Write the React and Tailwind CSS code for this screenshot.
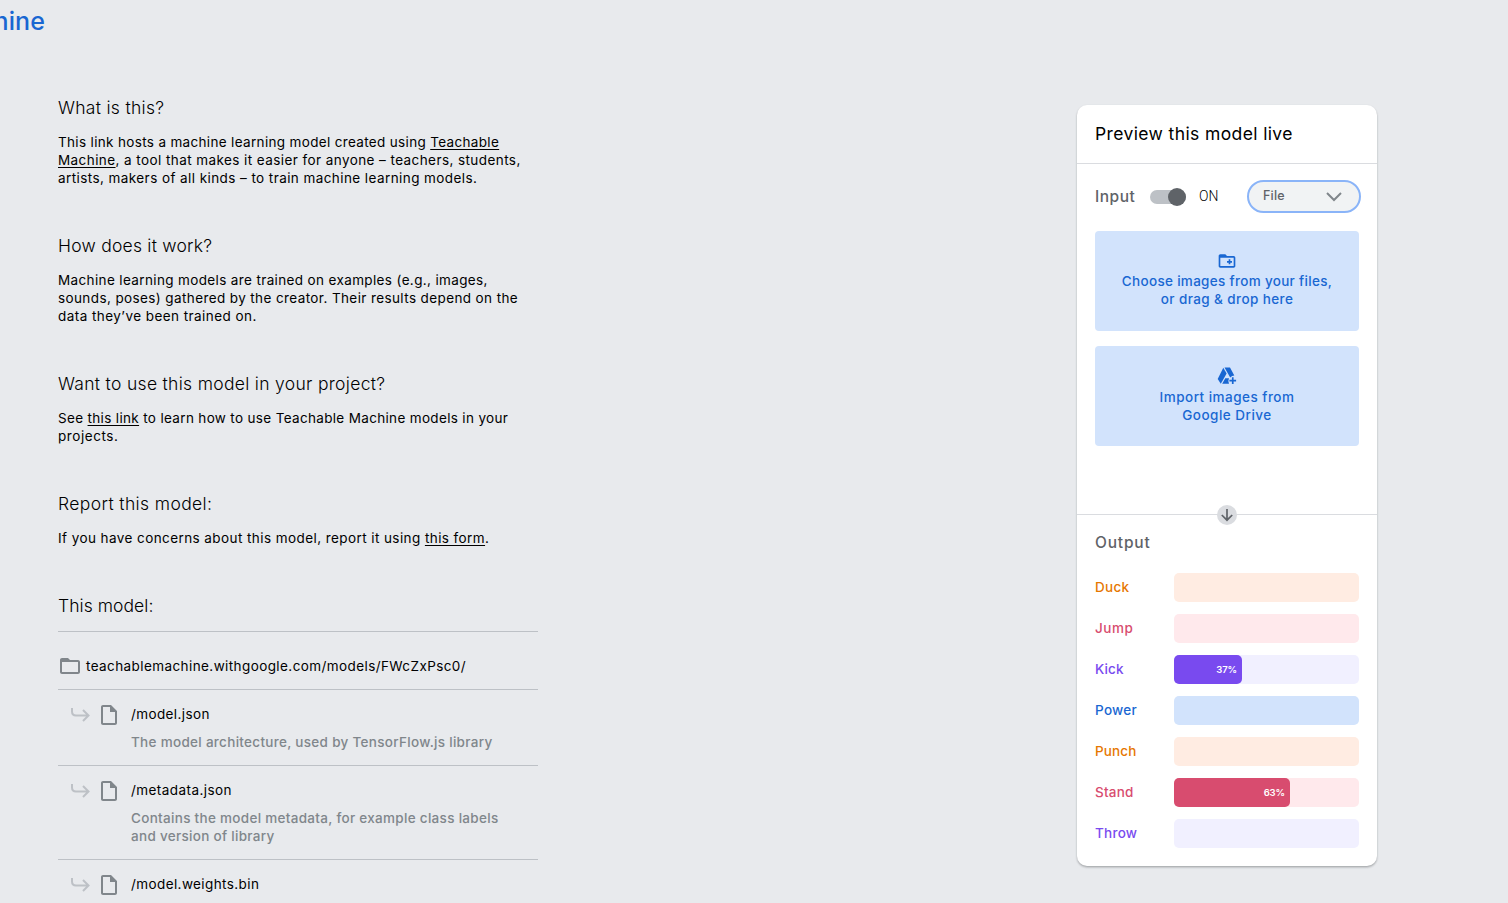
import { MdFolderOpen, MdOutlineInsertDriveFile } from 'react-icons/md';

function Section({ title, titleClass, children }) {
  return (
    <section className="mb-[47px]">
      <h2 className={`mb-[13px] text-[17.5px] leading-6 font-light ${titleClass}`}>{title}</h2>
      <div className="text-[13.5px] leading-[18px]">{children}</div>
    </section>
  );
}

function Line({ className, children }) {
  return <span className={`block whitespace-nowrap ${className}`}>{children}</span>;
}

function Link({ children }) {
  return (
    <a href="#" className="underline decoration-1 underline-offset-[1.5px]">
      {children}
    </a>
  );
}

function FolderPlusIcon() {
  return (
    <svg className="mb-px size-5" viewBox="0 0 24 24" fill="currentColor">
      <path d="M20 6h-8l-2-2H4c-1.100 0-2 .9-2 2v12c0 1.100.9 2 2 2h16c1.100 0 2-.9 2-2V8c0-1.100-.9-2-2-2zm0 12H4V8h16v10zM14 10h2v2h2v2h-2v2h-2v-2h-2v-2h2z" />
    </svg>
  );
}

function DrivePlusIcon() {
  return (
    <svg className="mb-0.5 size-5" viewBox="0 0 20 20" fill="currentColor">
      <path d="M6.300 1.800L9.600 7.500 3.800 17.800.7 13z" />
      <path d="M7.500 1.500H13L17.300 9.500Q15 9.500 13.200 11.500z" />
      <path d="M8.300 12.300H12Q10.800 14.500 12 17.700H5.200z" />
      <path d="M14.900 11.200h1.700v2.500h2.500v1.700h-2.500v2.500h-1.700v-2.500h-2.500v-1.700h2.500z" />
    </svg>
  );
}

function FileRow({ name, nameClass, children }) {
  return (
    <li className="flex border-t border-[#bdc1c6] pt-[13px] pb-[14px]">
      <svg className="mt-[3px] ml-3 h-[18px] w-[20px] shrink-0" viewBox="0 0 20 18" fill="none" stroke="#bdc1c6" strokeWidth="2">
        <path d="M2 2v3.500q0 4 4 4h12M13 4l5.500 5.500-5.500 5.500" />
      </svg>
      <MdOutlineInsertDriveFile className="ml-[7px] size-6 shrink-0 text-[#80868b]" />
      <div className="mt-0.5 ml-[10px] text-[13.5px] leading-[18px]">
        <p className={nameClass}>{name}</p>
        <div className="mt-[10px] font-medium text-[#80868b]">{children}</div>
      </div>
    </li>
  );
}

const classes = [
  { name: 'Duck', label: 'text-[#e67701] tracking-[0.27px]', track: 'bg-[#ffece2]' },
  { name: 'Jump', label: 'text-[#d84c6f] tracking-[0.55px]', track: 'bg-[#ffe9ec]' },
  { name: 'Kick', label: 'text-[#794aef] tracking-[0.1px]', track: 'bg-[#f1f0ff]', fill: 'bg-[#794aef]', value: 37 },
  { name: 'Power', label: 'text-[#1967d2] tracking-[0.3px]', track: 'bg-[#d2e3fc]' },
  { name: 'Punch', label: 'text-[#e67701] tracking-[0.15px]', track: 'bg-[#ffece2]' },
  { name: 'Stand', label: 'text-[#d84c6f] tracking-[0.2px]', track: 'bg-[#ffe9ec]', fill: 'bg-[#d84c6f]', value: 63 },
  { name: 'Throw', label: 'text-[#794aef] tracking-[0.25px]', track: 'bg-[#f1f0ff]' },
];

const TRACK_WIDTH = 185;

function UploadBox({ icon, children }) {
  return (
    <button className="flex h-[100px] w-full flex-col items-center rounded bg-[#d2e3fc] pt-5 text-[13.5px] leading-[18px] font-medium text-[#1967d2]">
      {icon}
      {children}
    </button>
  );
}

function PreviewCard() {
  return (
    <aside className="mt-[105px] h-[761px] w-[300px] shrink-0 rounded-[10px] bg-white shadow-[0_1px_2px_rgba(60,64,67,0.3),0_2px_2px_rgba(60,64,67,0.12)]">
      <h2 className="flex h-[59px] items-center border-b border-[#dadce0] pt-px pl-[18px] text-[17.5px] font-normal tracking-[0.38px] whitespace-nowrap">
        Preview this model live
      </h2>
      <div className="h-[351px] border-b border-[#dadce0] px-[18px] pt-4">
        <div className="-mr-0.5 flex h-[33px] items-center">
          <span className="w-[55px] text-[15.5px] font-medium tracking-[0.5px] text-[#5f6368]">Input</span>
          <span className="flex h-[14px] w-9 items-center justify-end rounded-full bg-[#bdc1c6]">
            <span className="size-[18px] shrink-0 rounded-full bg-[#5f6368]" />
          </span>
          <span className="ml-[13px] font-['Roboto',sans-serif] text-[14px] font-light">ON</span>
          <button className="ml-auto flex h-[33px] w-[114px] items-center justify-between rounded-full border-2 border-[#8ab4f8] bg-[#f1f3f4] pr-[17px] pl-[14px] text-[12.5px] font-medium tracking-[0.2px] text-[#5f6368]">
            File
            <svg className="h-[10px] w-[16px]" viewBox="0 0 16 10" fill="none" stroke="#80868b" strokeWidth="2">
              <path d="M1 1l7 7 7-7" />
            </svg>
          </button>
        </div>
        <div className="mt-[18px] flex flex-col gap-[15px]">
          <UploadBox icon={<FolderPlusIcon />}>
            <Line className="tracking-[0.31px]">Choose images from your files,</Line>
            <Line className="tracking-[0.4px]">or drag &amp; drop here</Line>
          </UploadBox>
          <UploadBox icon={<DrivePlusIcon />}>
            <Line className="tracking-[0.48px]">Import images from</Line>
            <Line className="tracking-[0.48px]">Google Drive</Line>
          </UploadBox>
        </div>
      </div>
      <div className="px-[18px]">
        <span className="mx-auto -mt-[10px] flex size-5 items-center justify-center rounded-full bg-[#dadce0]">
          <svg className="size-[14px]" viewBox="0 0 14 14" fill="none" stroke="#5f6368" strokeWidth="1.700">
            <path d="M7 1v11M1.800 7l5.200 5.200L12.200 7" />
          </svg>
        </span>
        <h3 className="mt-[6px] text-[15.5px] leading-6 font-medium tracking-[0.8px] text-[#5f6368]">Output</h3>
        <ul className="mt-[18px] flex flex-col gap-3">
          {classes.map((c) => (
            <li key={c.name} className="flex h-[29px] items-center">
              <span className={`w-[79px] text-[13.5px] font-medium ${c.label}`}>{c.name}</span>
              <span className={`flex h-full flex-1 rounded-[5px] ${c.track}`}>
                {c.value && (
                  <span
                    className={`flex h-full items-center justify-end rounded-[5px] pt-px pr-[5px] text-[9.5px] font-semibold tracking-[-0.1px] text-white ${c.fill}`}
                    style={{ width: Math.floor((c.value / 100) * TRACK_WIDTH) }}
                  >
                    {c.value}%
                  </span>
                )}
              </span>
            </li>
          ))}
        </ul>
      </div>
    </aside>
  );
}

export default function App() {
  return (
    <div className="flex h-screen items-start overflow-hidden bg-[#e8eaed] font-['Inter',sans-serif] text-black">
      <main className="w-[538px] shrink-0">
        <header className="flex h-[96px] w-[45px] justify-end overflow-hidden pt-[5px] text-[25px] leading-8 font-medium tracking-[0.1px] whitespace-nowrap text-[#1967d2]">
          Teachable Machine
        </header>
        <div className="pl-[58px]">
          <Section title="What is this?" titleClass="tracking-[0.3px]">
            <Line className="tracking-[0.335px]">
              This link hosts a machine learning model created using <Link>Teachable</Link>
            </Line>
            <Line className="tracking-[0.42px]">
              <Link>Machine</Link>, a tool that makes it easier for anyone – teachers, students,
            </Line>
            <Line className="tracking-[0.42px]">artists, makers of all kinds – to train machine learning models.</Line>
          </Section>
          <Section title="How does it work?" titleClass="tracking-[0.24px]">
            <Line className="tracking-[0.365px]">Machine learning models are trained on examples (e.g., images,</Line>
            <Line className="tracking-[0.39px]">sounds, poses) gathered by the creator. Their results depend on the</Line>
            <Line className="tracking-[0.44px]">data they’ve been trained on.</Line>
          </Section>
          <Section title="Want to use this model in your project?" titleClass="tracking-[0.31px]">
            <Line className="tracking-[0.335px]">
              See <Link>this link</Link> to learn how to use Teachable Machine models in your
            </Line>
            <Line className="tracking-[0.57px]">projects.</Line>
          </Section>
          <Section title="Report this model:" titleClass="tracking-[0.38px]">
            <Line className="tracking-[0.42px]">
              If you have concerns about this model, report it using <Link>this form</Link>.
            </Line>
          </Section>
          <h2 className="mb-[13px] text-[17.5px] leading-6 font-light tracking-[0.05px]">This model:</h2>
          <div className="flex h-[58px] items-center border-t border-[#bdc1c6] pt-[11px] text-[13.5px]">
            <MdFolderOpen className="mr-1 size-6 text-[#80868b]" />
            <span className="pt-px tracking-[0.41px]">teachablemachine.withgoogle.com/models/FWcZxPsc0/</span>
          </div>
          <ul>
            <FileRow name="/model.json" nameClass="tracking-[0.39px]">
              <Line className="tracking-[0.3px]">The model architecture, used by TensorFlow.js library</Line>
            </FileRow>
            <FileRow name="/metadata.json" nameClass="tracking-[0.43px]">
              <Line className="tracking-[0.3px]">Contains the model metadata, for example class labels</Line>
              <Line className="tracking-[0.3px]">and version of library</Line>
            </FileRow>
            <FileRow name="/model.weights.bin" nameClass="tracking-[0.4px]" />
          </ul>
        </div>
      </main>
      <div className="w-[539px] shrink-0" />
      <PreviewCard />
    </div>
  );
}
